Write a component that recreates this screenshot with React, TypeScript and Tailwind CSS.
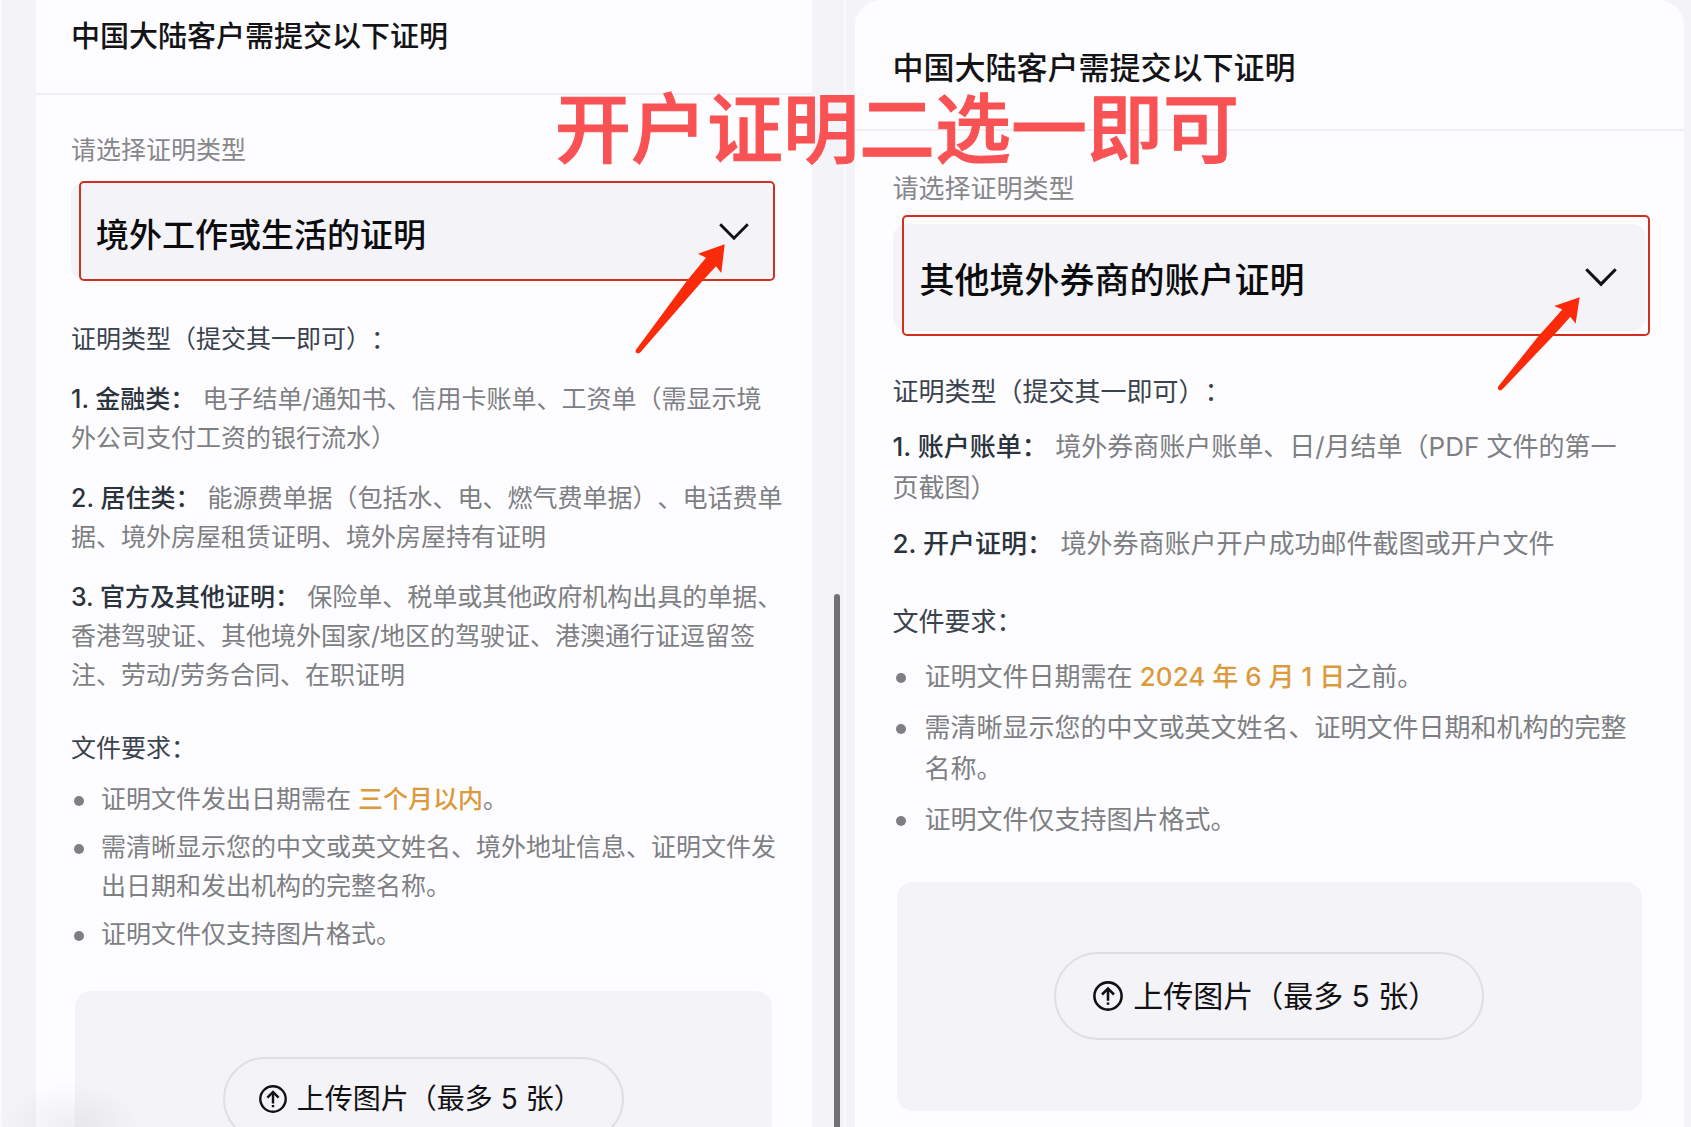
import { useState } from 'react'
import type { ReactNode } from 'react'
import clsx from 'clsx'

type Size = 'sm' | 'lg'

interface ProofItem {
  title: string
  text: string
}

const PROOF_OPTIONS = ['境外工作或生活的证明', '其他境外券商的账户证明']

const overseasItems: ProofItem[] = [
  { title: '1. 金融类：', text: '电子结单/通知书、信用卡账单、工资单（需显示境外公司支付工资的银行流水）' },
  { title: '2. 居住类：', text: '能源费单据（包括水、电、燃气费单据）、电话费单据、境外房屋租赁证明、境外房屋持有证明' },
  {
    title: '3. 官方及其他证明：',
    text: '保险单、税单或其他政府机构出具的单据、香港驾驶证、其他境外国家/地区的驾驶证、港澳通行证逗留签注、劳动/劳务合同、在职证明',
  },
]

const brokerItems: ProofItem[] = [
  { title: '1. 账户账单：', text: '境外券商账户账单、日/月结单（PDF 文件的第一页截图）' },
  { title: '2. 开户证明：', text: '境外券商账户开户成功邮件截图或开户文件' },
]

function Highlight({ children }: { children: ReactNode }) {
  return <span className="font-medium text-[#dc9a3c]">{children}</span>
}

function UploadIcon({ className }: { className?: string }) {
  return (
    <svg viewBox="0 0 28 28" fill="none" stroke="currentColor" strokeWidth="2.4" className={className} aria-hidden="true">
      <circle cx="14" cy="14" r="12.7" />
      <path d="M14 7V18.4M8.4 12.6 14 7l5.6 5.6" />
      <path d="M14 20v2.2" />
    </svg>
  )
}

function Chevron({ className }: { className?: string }) {
  return (
    <svg viewBox="0 0 30 18" fill="none" stroke="#111" strokeWidth="2.9" className={className} aria-hidden="true">
      <path d="M1.2 1.2 15 15.2 28.8 1.2" />
    </svg>
  )
}

interface ProofSelectProps {
  id: string
  size: Size
  initial: string
  children: ReactNode
}

function ProofSelect({ id, size, initial, children }: ProofSelectProps) {
  const [value, setValue] = useState(initial)
  const sm = size === 'sm'

  return (
    <div className={clsx('relative', sm ? 'mt-[13px]' : 'mt-[15px]')}>
      <select
        id={id}
        value={value}
        onChange={(e) => setValue(e.target.value)}
        className={clsx(
          'block w-full appearance-none bg-[#f4f3f8] font-medium text-[#0c0c0e] outline-none',
          sm ? 'h-[96px] rounded-[12px] pt-2 pl-[25px] text-[33px]' : 'h-[107px] rounded-[14px] pt-1.5 pl-[27px] text-[35px]'
        )}
      >
        {PROOF_OPTIONS.map((option) => (
          <option key={option}>{option}</option>
        ))}
      </select>
      <Chevron
        className={clsx(
          'pointer-events-none absolute',
          sm ? 'top-[40px] right-[26px] w-[30px]' : 'top-[44px] right-[29px] w-[32px]'
        )}
      />
      {children}
    </div>
  )
}

interface ProofPanelProps {
  id: string
  size: Size
  selected: string
  items: ProofItem[]
  requirements: ReactNode[]
  annotation: ReactNode
}

function ProofPanel({ id, size, selected, items, requirements, annotation }: ProofPanelProps) {
  const sm = size === 'sm'

  return (
    <section className={clsx('bg-[#fdfdff]', sm ? 'text-[25px] leading-[39px]' : 'min-h-full rounded-t-[26px] text-[26px] leading-[41px]')}>
      <header className={clsx('border-b-2 border-[#efeef2]', sm ? 'pt-[15px] pr-9 pb-[34px] pl-[35px]' : 'px-[38px] pt-[45px] pb-[38px]')}>
        <h2 className={clsx('font-medium text-[#141416]', sm ? 'text-[29px] leading-[44px]' : 'text-[31px] leading-[46px]')}>
          中国大陆客户需提交以下证明
        </h2>
      </header>

      <div className={clsx(sm ? 'pt-9 pr-[37px] pl-[35px]' : 'px-[38px] pt-[37px]')}>
        <label htmlFor={id} className="block text-[#87878b]">
          请选择证明类型
        </label>
        <ProofSelect id={id} size={size} initial={selected}>
          {annotation}
        </ProofSelect>

        <div className={clsx(sm ? '-mr-[10px]' : 'pr-1')}>
          <h3 className={clsx('text-[#3a434d]', sm ? 'mt-[41px]' : 'mt-10')}>证明类型（提交其一即可）：</h3>
          <div className={clsx('flex flex-col text-[#7e7f83]', sm ? 'mt-[21px] gap-[21px]' : 'mt-[14px] gap-[15px]')}>
            {items.map((item) => (
              <p key={item.title}>
                <strong className="font-medium text-[#2b333d]">{item.title}</strong> {item.text}
              </p>
            ))}
          </div>

          <h3 className={clsx('text-[#3a434d]', sm ? 'mt-[34px]' : 'mt-[37px]')}>文件要求：</h3>
          <ul className={clsx('flex flex-col text-[#7e7f83]', sm ? 'mt-3 gap-[9px]' : 'mt-[14px] gap-[10px]')}>
            {requirements.map((requirement, i) => (
              <li key={i} className={clsx('flex', sm ? 'gap-[17px] pl-[3px]' : 'gap-[19px] pl-[3px]')}>
                <span className={clsx('size-[10px] shrink-0 rounded-full bg-[#7e7f83]', sm ? 'mt-4' : 'mt-[17px]')} />
                <span>{requirement}</span>
              </li>
            ))}
          </ul>
        </div>

        <div
          className={clsx(
            'flex justify-center rounded-[16px] bg-[#f4f3f8]',
            sm ? 'mt-[37px] mr-[3px] ml-1 pt-[66px] pb-[66px]' : 'mx-1 mt-[42px] pt-[70px] pb-[71px]'
          )}
        >
          <button
            type="button"
            className={clsx(
              'flex items-center rounded-full border-2 border-[#dfdee3] text-[#111113]',
              sm ? 'h-[84px] gap-[10px] pr-10 pl-[34px] text-[28px]' : 'h-[88px] gap-[10px] pr-[44px] pl-[37px] text-[30px]'
            )}
          >
            <UploadIcon className={clsx(sm ? 'size-7' : 'size-[30px]')} />
            上传图片（最多 5 张）
          </button>
        </div>
      </div>
    </section>
  )
}

export default function App() {
  return (
    <main
      lang="zh-CN"
      className="relative grid h-screen grid-cols-2 overflow-hidden bg-[#f4f3f8] font-['Inter','Noto_Sans_CJK_SC',sans-serif] [text-spacing-trim:space-all]"
    >
      {/* Left phone */}
      <div className="relative overflow-hidden border-x-2 border-[#fafafc] pr-8 pl-[34px]">
        <ProofPanel
          id="proof-overseas"
          size="sm"
          selected={PROOF_OPTIONS[0]}
          items={overseasItems}
          requirements={[
            <>证明文件发出日期需在 <Highlight>三个月以内</Highlight>。</>,
            '需清晰显示您的中文或英文姓名、境外地址信息、证明文件发出日期和发出机构的完整名称。',
            '证明文件仅支持图片格式。',
          ]}
          annotation={
            <>
              <div className="pointer-events-none absolute -inset-y-[2px] right-0 left-[8px] rounded-[5px] border-2 border-[#d2301f]" />
              <svg
                viewBox="40 218 276 336"
                className="pointer-events-none absolute top-[60px] right-[49px] w-[92px]"
                fill="#fb2a0b"
                aria-hidden="true"
              >
                <path d="M312 222 232 250 256 262 Q220 305 200 330 L46 538 Q42 546 50 549 Q56 550 60 545 L238 340 Q262 314 286 288 L302 308Z" />
              </svg>
            </>
          }
        />
        <div className="absolute top-[594px] right-[4px] bottom-0 w-[6px] rounded-t-full bg-[#727276]" />
        <div className="pointer-events-none absolute -bottom-[45px] left-0 h-[90px] w-[140px] bg-radial from-[#6b6b6b]/10 to-transparent to-70%" />
      </div>

      {/* Right phone */}
      <div className="overflow-hidden pr-[7px] pl-[9px]">
        <ProofPanel
          id="proof-broker"
          size="lg"
          selected={PROOF_OPTIONS[1]}
          items={brokerItems}
          requirements={[
            <>证明文件日期需在 <Highlight>2024 年 6 月 1 日</Highlight>之前。</>,
            '需清晰显示您的中文或英文姓名、证明文件日期和机构的完整名称。',
            '证明文件仅支持图片格式。',
          ]}
          annotation={
            <>
              <div className="pointer-events-none absolute -top-[9px] -right-1 -bottom-[5px] left-[9px] rounded-[5px] border-2 border-[#d2301f]" />
              <svg
                viewBox="50 288 254 286"
                className="pointer-events-none absolute top-[72px] right-[65px] w-[85px]"
                fill="#fb2a0b"
                aria-hidden="true"
              >
                <path d="M300 292 224 318 248 328 Q206 376 180 404 L57 558 Q53 566 60 570 Q66 571 70 566 L222 406 Q246 380 272 350 L288 370Z" />
              </svg>
            </>
          }
        />
      </div>

      {/* Caption over both phones */}
      <h1 className="pointer-events-none absolute top-[89px] left-[555px] text-[76px] leading-[80px] font-medium whitespace-nowrap text-[#f95254] [-webkit-text-stroke:1px_#f95254]">
        开户证明二选一即可
      </h1>
    </main>
  )
}
